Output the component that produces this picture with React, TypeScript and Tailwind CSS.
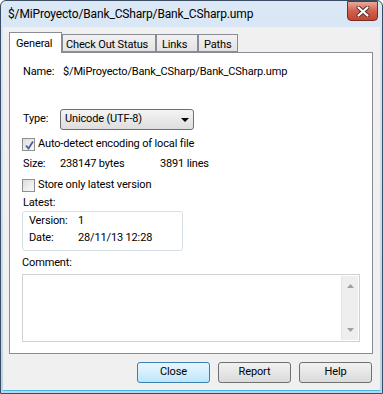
import React from "react";

const font = { fontFamily: 'Roboto, "Liberation Sans", Arial, sans-serif' };

function CheckBox({ checked }: { checked: boolean }) {
  return (
    <div className="w-[13px] h-[13px] border border-[#8e8f8f] bg-gradient-to-br from-[#dcdcdc] to-[#fbfbfb] p-[2px] shrink-0">
      <div className="w-full h-full bg-gradient-to-br from-[#e3e3e3] to-[#f6f6f6] relative">
        {checked && (
          <svg width="11" height="11" viewBox="0 0 11 11" className="absolute -left-[1px] -top-[1px]">
            <path d="M2 5.5 L4.5 8.5 L9 1.5" fill="none" stroke="#4a5f97" strokeWidth="1.8" />
          </svg>
        )}
      </div>
    </div>
  );
}

function Btn({ label, def }: { label: string; def?: boolean }) {
  return (
    <div
      className={
        "w-[73px] h-[21px] rounded-[3px] border flex items-center justify-center text-black " +
        (def
          ? "border-[#3c7fb1] bg-gradient-to-b from-[#eaf6fd] to-[#bee6fd]"
          : "border-[#707070] bg-gradient-to-b from-[#f2f2f2] to-[#dadada]")
      }
    >
      {label}
    </div>
  );
}

export default function App() {
  return (
    <div
      style={font}
      className="w-[383px] h-[394px] border border-[#3a4d63] rounded-t-[6px] bg-gradient-to-b from-[#dbe8f6] to-[#bcd3ea] flex flex-col overflow-hidden text-[11px] tracking-[-0.15px] text-black"
    >
      {/* title bar */}
      <div className="h-[26px] relative flex items-center pl-[7px] shrink-0">
        <span className="text-[12px] text-black">$/MiProyecto/Bank_CSharp/Bank_CSharp.ump</span>
        <div className="absolute right-[4px] top-0 w-[31px] h-[20px] rounded-b-[4px] border border-[#7a2b22] bg-gradient-to-b from-[#e9a99b] via-[#d0604d] to-[#c2462f] flex items-center justify-center">
          <svg width="14" height="11" viewBox="0 0 14 11">
            <path d="M2.5 1.5 L11.5 9.5 M11.5 1.5 L2.5 9.5" stroke="#5a2a24" strokeWidth="4" strokeLinecap="round" />
            <path d="M2.5 1.5 L11.5 9.5 M11.5 1.5 L2.5 9.5" stroke="#ffffff" strokeWidth="2.2" strokeLinecap="round" />
          </svg>
        </div>
      </div>
      {/* client */}
      <div className="flex-1 mx-[2px] mb-[2px] bg-[#f0f0f0] flex flex-col pl-[6px] pr-[8px] pt-[5px] border-b border-[#4ab8e2]">
        {/* tabs */}
        <div className="flex items-end h-[20px] relative z-10 whitespace-nowrap">
          <div className="w-[53px] h-[21px] -mb-[1px] bg-white border border-b-0 border-[#898c95] pl-[6px] pt-[3px]">
            General
          </div>
          <div className="w-[94px] h-[18px] bg-gradient-to-b from-[#f2f2f2] to-[#e3e3e3] border border-[#898c95] pl-[3px] pt-[2px]">
            Check Out Status
          </div>
          <div className="w-[42px] h-[18px] bg-gradient-to-b from-[#f2f2f2] to-[#e3e3e3] border border-[#898c95] pl-[5px] pt-[2px]">
            Links
          </div>
          <div className="w-[40px] h-[18px] bg-gradient-to-b from-[#f2f2f2] to-[#e3e3e3] border border-[#898c95] pl-[5px] pt-[2px]">
            Paths
          </div>
        </div>
        {/* panel */}
        <div className="w-[364px] h-[302px] bg-white border border-[#898c95] flex flex-col pl-[12px] pt-[12px] whitespace-nowrap">
          <div className="flex h-[15px] items-center">
            <span className="w-[41px] pl-[1px]">Name:</span>
            <span>$/MiProyecto/Bank_CSharp/Bank_CSharp.ump</span>
          </div>
          <div className="flex items-center mt-[29px] h-[21px]">
            <span className="w-[38px] pl-[1px]">Type:</span>
            <div className="w-[134px] h-[21px] rounded-[3px] border border-[#707070] bg-gradient-to-b from-[#f4f4f4] to-[#dedede] flex items-center pl-[4px] pr-[4px] justify-between">
              <span>Unicode (UTF-8)</span>
              <svg width="8" height="4" viewBox="0 0 8 4">
                <path d="M0 0 L8 0 L4 4 Z" fill="#000" />
              </svg>
            </div>
          </div>
          <div className="flex items-center gap-[3px] mt-[7px] h-[15px]">
            <CheckBox checked />
            <span>Auto-detect encoding of local file</span>
          </div>
          <div className="flex items-center mt-[5px] h-[15px]">
            <span className="w-[38px] pl-[1px]">Size:</span>
            <span className="w-[100px]">238147 bytes</span>
            <span>3891 lines</span>
          </div>
          <div className="flex items-center gap-[3px] mt-[6px] h-[15px]">
            <CheckBox checked={false} />
            <span>Store only latest version</span>
          </div>
          <div className="mt-[3px] h-[15px] flex items-center pl-[1px]">Latest:</div>
          <div className="w-[161px] h-[40px] border border-[#d5dfe5] rounded-[3px] pl-[6px] pt-[2px] flex flex-col gap-[2px]">
            <div className="flex h-[15px] items-center">
              <span className="w-[49px]">Version:</span>
              <span>1</span>
            </div>
            <div className="flex h-[15px] items-center">
              <span className="w-[49px]">Date:</span>
              <span>28/11/13 12:28</span>
            </div>
          </div>
          <div className="mt-[5px] h-[15px] flex items-center">Comment:</div>
          <div className="mt-[3px] w-[338px] h-[68px] border border-[#d0d0d0] flex justify-end p-[1px]">
            <div className="w-[17px] h-full bg-[#eeeeee] border-l border-[#e3e3e3] flex flex-col items-center justify-between py-[8px]">
              <svg width="7" height="4" viewBox="0 0 7 4">
                <path d="M0 4 L7 4 L3.5 0 Z" fill="#a0a0a0" />
              </svg>
              <svg width="7" height="4" viewBox="0 0 7 4">
                <path d="M0 0 L7 0 L3.5 4 Z" fill="#a0a0a0" />
              </svg>
            </div>
          </div>
        </div>
        {/* buttons */}
        <div className="flex justify-end gap-[8px] mt-[8px]">
          <Btn label="Close" def />
          <Btn label="Report" />
          <Btn label="Help" />
        </div>
      </div>
    </div>
  );
}
